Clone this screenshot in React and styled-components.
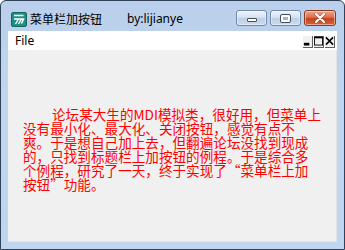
import React from "react";
import styled, { createGlobalStyle } from "styled-components";

const GlobalStyle = createGlobalStyle`
  html, body {
    margin: 0;
    padding: 0;
    background: #ffffff;
  }
`;

function AppIcon() {
  return (
    <svg width="16" height="15" viewBox="0 0 16 15">
      <rect x="0.5" y="0.5" width="15" height="14" rx="1.5" fill="#1f8f86" stroke="#14665f" />
      <path d="M3 3.5h9.5" stroke="#fff" strokeWidth="1.6" />
      <path d="M3 7h9.5l-2 4.5" stroke="#fff" strokeWidth="1.6" fill="none" />
      <path d="M4.5 12l3-5M7.5 12l3-5" stroke="#fff" strokeWidth="1.4" />
    </svg>
  );
}

function App() {
  return (
    <>
      <GlobalStyle />
      <Window>
        <TitleBar>
          <AppIcon />
          <Title>菜单栏加按钮</Title>
          <Author>by:lijianye</Author>
          <Captions>
            <CaptionBtn>
              <MinGlyph />
            </CaptionBtn>
            <CaptionBtn>
              <MaxGlyph />
            </CaptionBtn>
            <CaptionBtn $close>
              <svg width="12" height="10" viewBox="0 0 12 10">
                <path d="M2 1l8 8M10 1l-8 8" stroke="#5a1a0a" strokeWidth="3.4" strokeLinecap="round" opacity="0.35" />
                <path d="M2 1l8 8M10 1l-8 8" stroke="#fff" strokeWidth="2.2" strokeLinecap="round" />
              </svg>
            </CaptionBtn>
          </Captions>
        </TitleBar>
        <MenuBar>
          <MenuItem>File</MenuItem>
          <MdiButtons>
            <MdiBtn>
              <svg width="10" height="10" viewBox="0 0 10 10">
                <rect x="1" y="7" width="6" height="3" fill="#000" />
              </svg>
            </MdiBtn>
            <MdiBtn>
              <svg width="10" height="10" viewBox="0 0 10 10">
                <rect x="0.5" y="0.5" width="9" height="9" fill="none" stroke="#000" />
                <rect x="0" y="0" width="10" height="2" fill="#000" />
              </svg>
            </MdiBtn>
            <MdiBtn>
              <svg width="10" height="10" viewBox="0 0 10 10">
                <path d="M1 1l8 8M9 1l-8 8" stroke="#000" strokeWidth="1.7" />
              </svg>
            </MdiBtn>
          </MdiButtons>
        </MenuBar>
        <Client>
          <Notice lang="zh-CN">
            论坛某大生的MDI模拟类，很好用，但菜单上<br />
            没有最小化、最大化、关闭按钮，感觉有点不<br />
            爽。于是想自己加上去，但翻遍论坛没找到现成<br />
            的，只找到标题栏上加按钮的例程。于是综合多<br />
            个例程，研究了一天，终于实现了“菜单栏上加<br />
            按钮”功能。
          </Notice>
        </Client>
      </Window>
    </>
  );
}

export default App;

const Window = styled.div`
  width: 345px;
  height: 250px;
  box-sizing: border-box;
  border: 1px solid #2f4258;
  border-radius: 6px 6px 0 0;
  padding: 0 7px 7px 7px;
  display: flex;
  flex-direction: column;
  background: linear-gradient(to bottom, #b9cfeb 0%, #c2d6ef 40%, #bfd5f0 100%);
  overflow: hidden;
`;

const TitleBar = styled.div`
  height: 29px;
  display: flex;
  align-items: flex-start;
  padding: 10px 0 0 3px;
  box-sizing: border-box;
  svg {
    flex: none;
    margin-top: 1px;
  }
`;

const Title = styled.span`
  font-family: "Noto Sans CJK SC", "Noto Sans", sans-serif;
  font-size: 12px;
  line-height: 16px;
  color: #000;
  margin-left: 3px;
`;

const Author = styled.span`
  font-family: "Noto Sans", "Liberation Sans", sans-serif;
  font-size: 12px;
  line-height: 16px;
  color: #000;
  margin-left: 25px;
`;

const Captions = styled.div`
  margin-left: auto;
  margin-top: -1px;
  margin-right: 1px;
  display: flex;
  gap: 3px;
`;

const CaptionBtn = styled.div`
  width: ${(p) => (p.$close ? "32px" : "31px")};
  height: 16px;
  box-sizing: border-box;
  border: 1px solid ${(p) => (p.$close ? "#8a3a22" : "#7189aa")};
  border-radius: 3px;
  display: flex;
  align-items: center;
  justify-content: center;
  background: ${(p) =>
    p.$close
      ? "linear-gradient(to bottom, #eaa58c 0%, #dd6e4c 45%, #c7421d 55%, #d4623c 100%)"
      : "linear-gradient(to bottom, #eef3fa 0%, #d6e2f1 45%, #bccfe7 55%, #cddcee 100%)"};
  box-shadow: inset 0 0 0 1px rgba(255, 255, 255, 0.45);
  svg {
    margin-top: 0 !important;
  }
`;

const MinGlyph = styled.span`
  width: 8px;
  height: 2px;
  margin-top: 4px;
  background: #fff;
  border: 1px solid #3f4d60;
  border-radius: 1px;
`;

const MaxGlyph = styled.span`
  width: 5px;
  height: 3px;
  border: 2px solid #fff;
  outline: 1px solid #3f4d60;
  border-radius: 1px;
  background: #9fb3cc;
`;

const MenuBar = styled.div`
  height: 19px;
  background: #ffffff;
  display: flex;
  align-items: center;
  padding: 0 2px 0 7px;
  margin-top: 1px;
`;

const MenuItem = styled.span`
  font-family: "Noto Sans", "Liberation Sans", sans-serif;
  font-size: 12px;
  line-height: 16px;
  color: #000;
`;

const MdiButtons = styled.div`
  margin-left: auto;
  display: flex;
  margin-top: 2px;
`;

const MdiBtn = styled.div`
  width: 10px;
  height: 12px;
  box-sizing: border-box;
  background: #f0f0f0;
  border-right: 1px solid #606060;
  border-bottom: 1px solid #606060;
  display: flex;
  align-items: center;
  justify-content: center;
  & + & {
    margin-left: 1px;
  }
`;

const Client = styled.div`
  flex: 1;
  background: #f0f0f0;
  border-right: 1px solid #e3e3e3;
  border-bottom: 1px solid #e3e3e3;
  padding: 57px 0 0 15px;
  overflow: hidden;
`;

const Notice = styled.div`
  font-family: "Noto Sans CJK SC", "Noto Sans", sans-serif;
  font-size: 13.6px;
  line-height: 14px;
  color: #ff0000;
  white-space: nowrap;
  text-indent: 29px;
`;
